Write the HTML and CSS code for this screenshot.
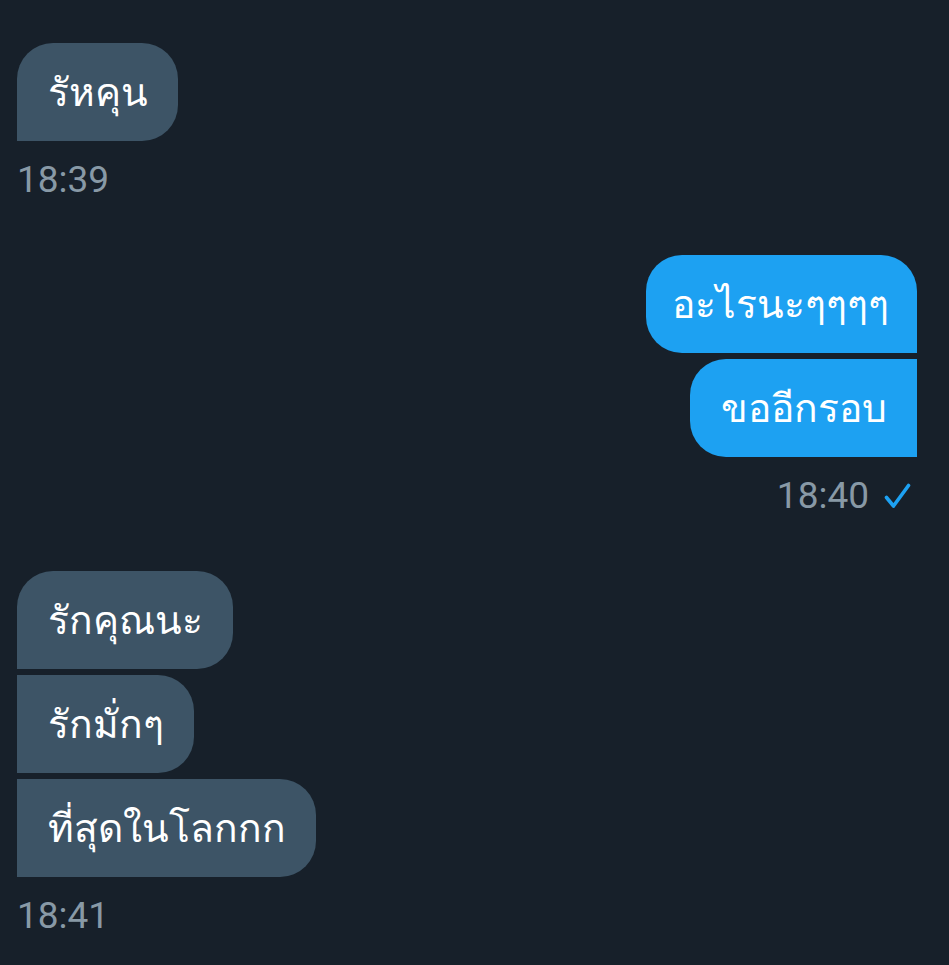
FILE: index.html
```html
<!DOCTYPE html>
<html lang="th">
<head>
    <meta charset="UTF-8">
    <meta name="viewport" content="width=device-width, initial-scale=1.0">
    <title>ข้อความ</title>
    <link rel="stylesheet" href="styles.css">
</head>
<body>
    <div class="chat">
        <div class="group in">
            <div class="bubble single">รัหคุน</div>
            <div class="time">18:39</div>
        </div>

        <div class="group out">
            <div class="bubble first">อะไรนะๆๆๆๆ</div>
            <div class="bubble last">ขออีกรอบ</div>
            <div class="time">18:40
                <svg class="check" viewBox="0 0 27 26" width="27" height="26">
                    <path d="M2.5 14.5l7 8.5L24.5 2.5" fill="none" stroke="#1da1f2" stroke-width="3.6" stroke-linecap="round" stroke-linejoin="round"/>
                </svg>
            </div>
        </div>

        <div class="group in">
            <div class="bubble first">รักคุณนะ</div>
            <div class="bubble mid">รักมั่กๆ</div>
            <div class="bubble last">ที่สุดในโลกกก</div>
            <div class="time">18:41</div>
        </div>
    </div>
</body>
</html>
```

FILE: styles.css
```css
/* Общий фон */
body {
    margin: 0;
    background: #17202a;
    font-family: Roboto, "Noto Sans", sans-serif;
    color: #fff;
}

.chat {
    padding: 43px 32px 0 17px;
}

.group {
    display: flex;
    flex-direction: column;
    gap: 6px;
    margin-bottom: 54px;
}

.group.in {
    align-items: flex-start;
}

.group.out {
    align-items: flex-end;
}

/* Пузырь сообщения */
.bubble {
    height: 98px;
    box-sizing: border-box;
    padding: 0 30px 0 31px;
    display: flex;
    align-items: center;
    font-size: 39px;
    font-weight: 500;
    border-radius: 36px;
}

.in .bubble {
    background: #3d5466;
}

.out .bubble {
    background: #1da1f2;
}

.out .first {
    padding-left: 26px;
    padding-right: 28px;
}

.in .single,
.in .first,
.in .mid {
    border-bottom-left-radius: 0;
}

.in .mid,
.in .last {
    border-top-left-radius: 0;
    border-bottom-left-radius: 0;
}

.out .first {
    border-bottom-right-radius: 0;
}

.out .last {
    border-top-right-radius: 0;
    border-bottom-right-radius: 0;
}

/* Время */
.time {
    margin-top: 11px;
    font-size: 37px;
    color: #8899a6;
    display: flex;
    align-items: center;
    gap: 15px;
}

.check {
    margin-right: 6px;
}
```
